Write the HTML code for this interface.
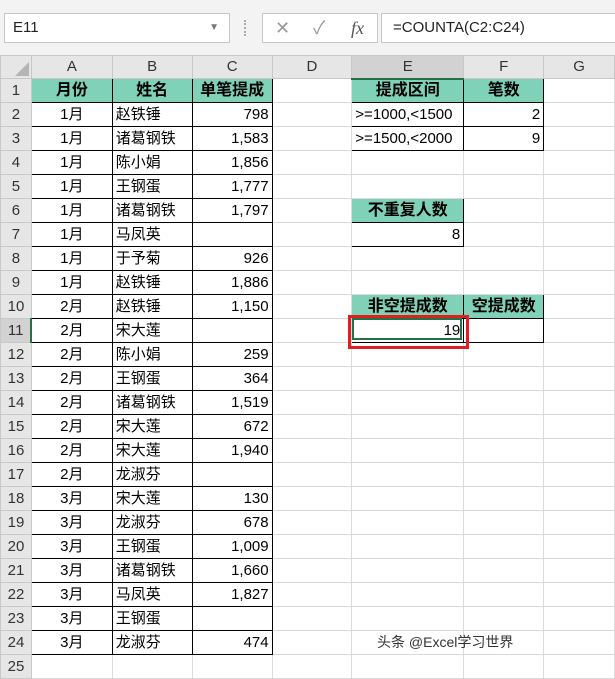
<!DOCTYPE html>
<html><head><meta charset="utf-8"><style>
body{margin:0;width:615px;height:664px;overflow:hidden;background:#fff;font-family:"Liberation Sans","Noto Sans CJK SC",sans-serif;position:relative}
.top{position:absolute;left:0;top:0;width:615px;height:55px;background:#f3f3f3}
.box{position:absolute;background:#fff;border:1px solid #c6c6c6;box-sizing:border-box;font-size:15px;line-height:28px;color:#222}
table{position:absolute;left:0;top:55px;border-collapse:collapse;table-layout:fixed;font-size:15px;line-height:18px;font-family:"Liberation Sans","Noto Sans CJK SC",sans-serif}
tr{height:24px}
td{border:1px solid #dadada;height:23px;max-height:23px;padding:0 3px;white-space:nowrap;overflow:hidden;color:#000;box-sizing:border-box}
tr.h{height:23px}
tr.h td{background:#e6e6e6;text-align:center;color:#333;height:22px;border-color:#c8c8c8}
td.rh{background:#e6e6e6;text-align:center;color:#333;padding:0;border-color:#c8c8c8}
td.b{border:1px solid #000}
td.g{background:#7fd1b8;font-weight:bold;text-align:center;border:1px solid #000;font-size:16px}
.c{text-align:center}.r{text-align:right}
</style></head><body>
<div class="top"></div>
<div class="box" style="left:4px;top:13px;width:226px;height:30px;padding-left:8px">E11<span style="position:absolute;right:10px;top:0;color:#777;font-size:10px">▼</span></div>
<div style="position:absolute;left:244px;top:20px;width:3px;height:16px;border-left:2px dotted #aaa"></div>
<div class="box" style="left:262px;top:13px;width:116px;height:30px;color:#999;font-size:18px"><span style="position:absolute;left:12px">✕</span><span style="position:absolute;left:50px">✓</span><span style="position:absolute;left:88px;font-family:'Liberation Serif',serif;font-style:italic;color:#555">fx</span></div>
<div class="box" style="left:381px;top:13px;width:240px;height:30px;padding-left:11px">=COUNTA(C2:C24)</div>
<table>
<colgroup><col style="width:31px"><col style="width:81px"><col style="width:80px"><col style="width:80px"><col style="width:80px"><col style="width:112px"><col style="width:80px"><col style="width:71px"></colgroup>
<tr class="h"><td style="position:relative"><div style="position:absolute;right:2px;bottom:2px;width:0;height:0;border-left:14px solid transparent;border-bottom:14px solid #b5b5b5"></div></td><td>A</td><td>B</td><td>C</td><td>D</td><td style="background:#d2d2d2;border-bottom:2px solid #217346">E</td><td>F</td><td>G</td></tr>
<tr><td class="rh">1</td><td class="g">月份</td><td class="g">姓名</td><td class="g">单笔提成</td><td></td><td class="g">提成区间</td><td class="g">笔数</td><td></td></tr>
<tr><td class="rh">2</td><td class="b c">1月</td><td class="b">赵铁锤</td><td class="b r">798</td><td></td><td class="b">&gt;=1000,&lt;1500</td><td class="b r">2</td><td></td></tr>
<tr><td class="rh">3</td><td class="b c">1月</td><td class="b">诸葛钢铁</td><td class="b r">1,583</td><td></td><td class="b">&gt;=1500,&lt;2000</td><td class="b r">9</td><td></td></tr>
<tr><td class="rh">4</td><td class="b c">1月</td><td class="b">陈小娟</td><td class="b r">1,856</td><td></td><td></td><td></td><td></td></tr>
<tr><td class="rh">5</td><td class="b c">1月</td><td class="b">王钢蛋</td><td class="b r">1,777</td><td></td><td></td><td></td><td></td></tr>
<tr><td class="rh">6</td><td class="b c">1月</td><td class="b">诸葛钢铁</td><td class="b r">1,797</td><td></td><td class="g">不重复人数</td><td></td><td></td></tr>
<tr><td class="rh">7</td><td class="b c">1月</td><td class="b">马凤英</td><td class="b r"></td><td></td><td class="b r">8</td><td></td><td></td></tr>
<tr><td class="rh">8</td><td class="b c">1月</td><td class="b">于予菊</td><td class="b r">926</td><td></td><td></td><td></td><td></td></tr>
<tr><td class="rh">9</td><td class="b c">1月</td><td class="b">赵铁锤</td><td class="b r">1,886</td><td></td><td></td><td></td><td></td></tr>
<tr><td class="rh">10</td><td class="b c">2月</td><td class="b">赵铁锤</td><td class="b r">1,150</td><td></td><td class="g">非空提成数</td><td class="g">空提成数</td><td></td></tr>
<tr><td class="rh" style="background:#d2d2d2;border-right:2px solid #217346">11</td><td class="b c">2月</td><td class="b">宋大莲</td><td class="b r"></td><td></td><td class="b r">19</td><td class="b r"></td><td></td></tr>
<tr><td class="rh">12</td><td class="b c">2月</td><td class="b">陈小娟</td><td class="b r">259</td><td></td><td></td><td></td><td></td></tr>
<tr><td class="rh">13</td><td class="b c">2月</td><td class="b">王钢蛋</td><td class="b r">364</td><td></td><td></td><td></td><td></td></tr>
<tr><td class="rh">14</td><td class="b c">2月</td><td class="b">诸葛钢铁</td><td class="b r">1,519</td><td></td><td></td><td></td><td></td></tr>
<tr><td class="rh">15</td><td class="b c">2月</td><td class="b">宋大莲</td><td class="b r">672</td><td></td><td></td><td></td><td></td></tr>
<tr><td class="rh">16</td><td class="b c">2月</td><td class="b">宋大莲</td><td class="b r">1,940</td><td></td><td></td><td></td><td></td></tr>
<tr><td class="rh">17</td><td class="b c">2月</td><td class="b">龙淑芬</td><td class="b r"></td><td></td><td></td><td></td><td></td></tr>
<tr><td class="rh">18</td><td class="b c">3月</td><td class="b">宋大莲</td><td class="b r">130</td><td></td><td></td><td></td><td></td></tr>
<tr><td class="rh">19</td><td class="b c">3月</td><td class="b">龙淑芬</td><td class="b r">678</td><td></td><td></td><td></td><td></td></tr>
<tr><td class="rh">20</td><td class="b c">3月</td><td class="b">王钢蛋</td><td class="b r">1,009</td><td></td><td></td><td></td><td></td></tr>
<tr><td class="rh">21</td><td class="b c">3月</td><td class="b">诸葛钢铁</td><td class="b r">1,660</td><td></td><td></td><td></td><td></td></tr>
<tr><td class="rh">22</td><td class="b c">3月</td><td class="b">马凤英</td><td class="b r">1,827</td><td></td><td></td><td></td><td></td></tr>
<tr><td class="rh">23</td><td class="b c">3月</td><td class="b">王钢蛋</td><td class="b r"></td><td></td><td></td><td></td><td></td></tr>
<tr><td class="rh">24</td><td class="b c">3月</td><td class="b">龙淑芬</td><td class="b r">474</td><td></td><td></td><td></td><td></td></tr>
<tr><td class="rh">25</td><td></td><td></td><td></td><td></td><td></td><td></td><td></td></tr>
</table>
<div style="position:absolute;left:348px;top:315px;width:115px;height:28px;border:3px solid #e02020;box-sizing:content-box"></div>
<div style="position:absolute;left:352px;top:318px;width:110px;height:22px;border:2px solid #217346;box-sizing:border-box"></div>
<div style="position:absolute;left:377px;top:632px;font-size:14px;color:#333;font-family:'Liberation Sans','Noto Sans CJK SC',sans-serif">头条 @Excel学习世界</div>
</body></html>
